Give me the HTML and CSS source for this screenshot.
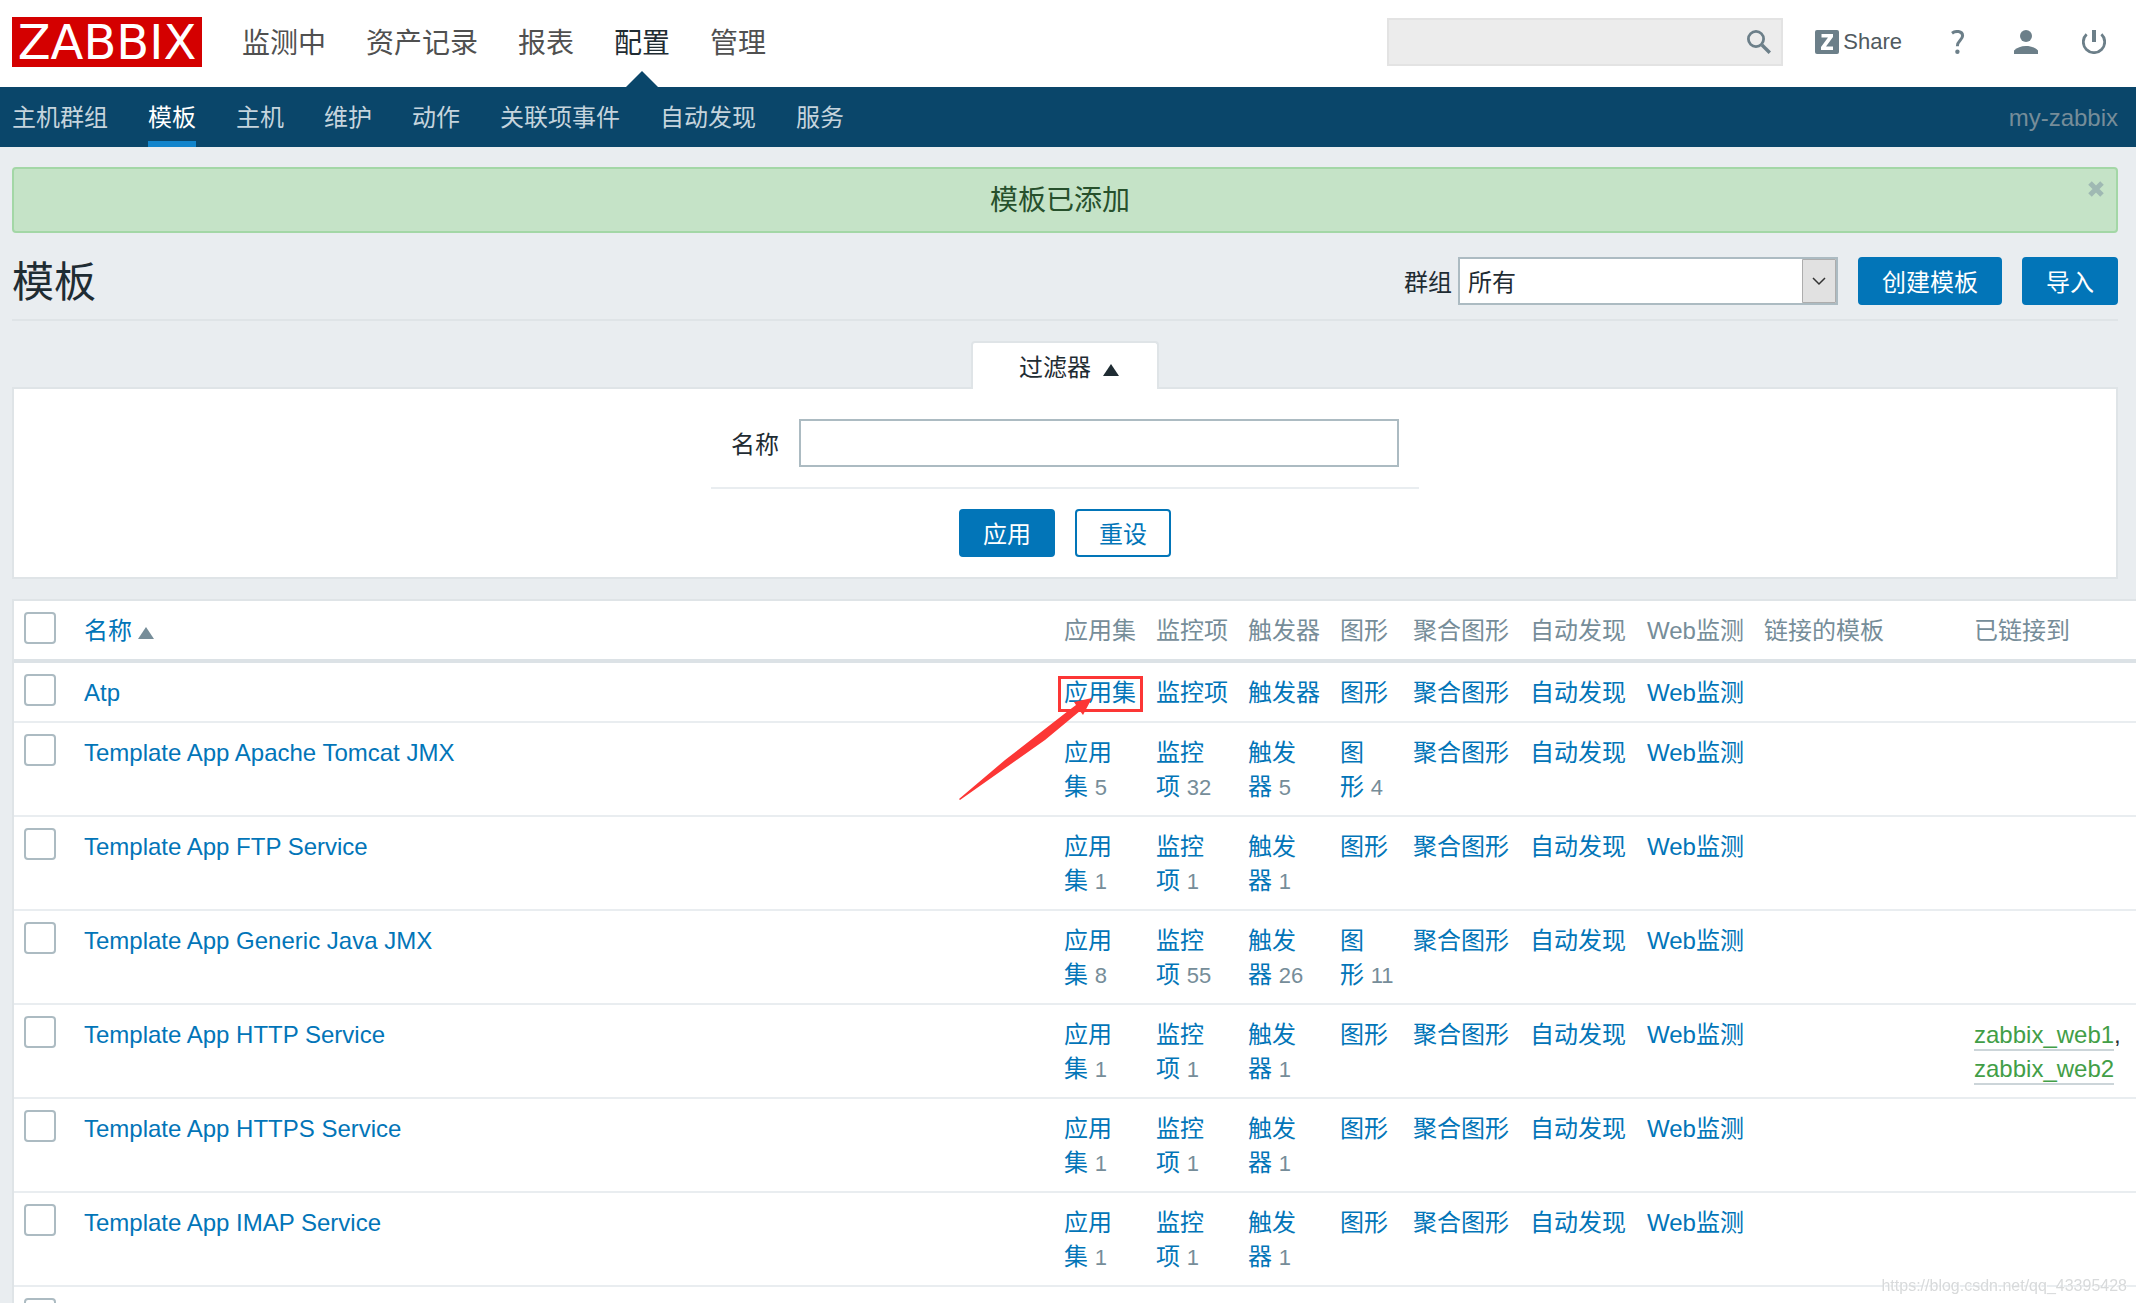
FILE: index.html
```html
<!DOCTYPE html>
<html lang="zh-CN">
<head>
<meta charset="utf-8">
<title>模板</title>
<link rel="stylesheet" href="styles.css">
</head>
<body>
<header class="top">
  <a class="logo" href="#">ZABBIX</a>
  <nav class="main-nav">
    <a href="#">监测中</a>
    <a href="#">资产记录</a>
    <a href="#">报表</a>
    <a class="selected" href="#">配置</a>
    <a href="#">管理</a>
  </nav>
  <form class="search">
    <input type="text" aria-label="搜索">
    <button type="button" aria-label="搜索">
      <svg class="icon" viewBox="0 0 24 24"><circle cx="9" cy="9" r="7.6" fill="none" stroke="currentColor" stroke-width="2.8"/><path d="M15 15l7.800 7.800" stroke="currentColor" stroke-width="3.400"/></svg>
    </button>
  </form>
  <div class="user-nav">
    <a class="share" href="#">
      <svg class="icon" viewBox="0 0 24 24"><rect width="24" height="24" rx="2" fill="currentColor"/><path d="M6.500 4h11.500v3l-7 9.500h7V20H6v-3l7-9.500H6.500z" fill="#fff"/></svg>
      <span>Share</span>
    </a>
    <a href="#" aria-label="帮助">
      <svg class="icon" viewBox="0 0 24 24"><path d="M6 3.200C9.500.6 16.600.6 16.600 5.800c0 4.200-5.400 5-5.200 10.400" fill="none" stroke="currentColor" stroke-width="3"/><circle cx="11.400" cy="21.800" r="2.200" fill="currentColor"/></svg>
    </a>
    <a class="profile" href="#" aria-label="用户">
      <svg class="icon" viewBox="0 0 24 24"><circle cx="12" cy="6" r="6" fill="currentColor"/><path d="M0 24v-3.500C3 17.500 7 16 12 16s9 1.500 12 4.500V24z" fill="currentColor"/></svg>
    </a>
    <a class="signout" href="#" aria-label="登出">
      <svg class="icon" viewBox="0 0 24 24"><path d="M4.600 4.200a10.700 10.700 0 1 0 14.800 0" fill="none" stroke="currentColor" stroke-width="2.800"/><path d="M12 0v12" stroke="currentColor" stroke-width="4"/></svg>
    </a>
  </div>
</header>
<nav class="sub-nav">
  <a href="#">主机群组</a>
  <a class="selected" href="#">模板</a>
  <a href="#">主机</a>
  <a href="#">维护</a>
  <a href="#">动作</a>
  <a href="#">关联项事件</a>
  <a href="#">自动发现</a>
  <a href="#">服务</a>
  <span class="server-name">my-zabbix</span>
</nav>
<main>
  <div class="message" role="status">
    <span>模板已添加</span>
    <button class="close" type="button" aria-label="关闭">
      <svg viewBox="0 0 16 16"><path d="M2 2l12 12M14 2L2 14" stroke="currentColor" stroke-width="5"/></svg>
    </button>
  </div>
  <div class="title-bar">
    <h1>模板</h1>
    <form class="controls">
      <label for="group">群组</label>
      <div class="select">
        <select id="group"><option>所有</option></select>
        <svg class="select-arrow" viewBox="0 0 34 44"><path d="M.5.5h33v43H.5z" fill="#e1e1e1" stroke="#adadad"/><path d="M11 19l6 6 6-6" fill="none" stroke="#333" stroke-width="1.500"/></svg>
      </div>
      <button class="btn" type="button">创建模板</button>
      <button class="btn" type="button">导入</button>
    </form>
  </div>
  <section class="filter">
    <button class="filter-tab" type="button">过滤器<span class="up dark"></span></button>
    <form class="filter-panel">
      <div class="filter-row">
        <label for="name">名称</label>
        <input id="name" type="text">
      </div>
      <div class="filter-actions">
        <button class="btn" type="button">应用</button>
        <button class="btn alt" type="button">重设</button>
      </div>
    </form>
  </section>
  <table class="list">
    <colgroup>
      <col class="c-check"><col><col class="c-count"><col class="c-count"><col class="c-count"><col class="c-graph"><col class="c-wide"><col class="c-wide"><col class="c-wide"><col class="c-linked"><col class="c-to">
    </colgroup>
    <thead>
      <tr><th class="check"><input type="checkbox" aria-label="全选"></th><th><a href="#">名称<span class="up"></span></a></th><th>应用集</th><th>监控项</th><th>触发器</th><th>图形</th><th>聚合图形</th><th>自动发现</th><th>Web监测</th><th>链接的模板</th><th>已链接到</th></tr>
    </thead>
    <tbody>
      <tr>
        <td class="check"><input type="checkbox" aria-label="Atp"></td>
        <td><a href="#">Atp</a></td>
        <td><div class="marked"><a href="#">应用集</a><svg class="marker" viewBox="955 670 195 135"><path d="M1060.500 677.500h82v33h-82z" fill="none" stroke="#fc3635" stroke-width="3"/><path d="M960 799L1006 760 1069 711 1077 705 1075 702 1093 698 1084 715 1081 711 1046 740 961 800z" fill="#fc3635"/></svg></div></td>
        <td><a href="#">监控项</a></td>
        <td><a href="#">触发器</a></td>
        <td><a href="#">图形</a></td>
        <td><a href="#">聚合图形</a></td>
        <td><a href="#">自动发现</a></td>
        <td><a href="#">Web监测</a></td>
        <td></td><td></td>
      </tr>
      <tr>
        <td class="check"><input type="checkbox" aria-label="Template App Apache Tomcat JMX"></td>
        <td><a href="#">Template App Apache Tomcat JMX</a></td>
        <td><a href="#">应用集</a>&nbsp;<small>5</small></td>
        <td><a href="#">监控项</a>&nbsp;<small>32</small></td>
        <td><a href="#">触发器</a>&nbsp;<small>5</small></td>
        <td><a href="#">图形</a>&nbsp;<small>4</small></td>
        <td><a href="#">聚合图形</a></td>
        <td><a href="#">自动发现</a></td>
        <td><a href="#">Web监测</a></td>
        <td></td><td></td>
      </tr>
      <tr>
        <td class="check"><input type="checkbox" aria-label="Template App FTP Service"></td>
        <td><a href="#">Template App FTP Service</a></td>
        <td><a href="#">应用集</a>&nbsp;<small>1</small></td>
        <td><a href="#">监控项</a>&nbsp;<small>1</small></td>
        <td><a href="#">触发器</a>&nbsp;<small>1</small></td>
        <td><a href="#">图形</a></td>
        <td><a href="#">聚合图形</a></td>
        <td><a href="#">自动发现</a></td>
        <td><a href="#">Web监测</a></td>
        <td></td><td></td>
      </tr>
      <tr>
        <td class="check"><input type="checkbox" aria-label="Template App Generic Java JMX"></td>
        <td><a href="#">Template App Generic Java JMX</a></td>
        <td><a href="#">应用集</a>&nbsp;<small>8</small></td>
        <td><a href="#">监控项</a>&nbsp;<small>55</small></td>
        <td><a href="#">触发器</a>&nbsp;<small>26</small></td>
        <td><a href="#">图形</a>&nbsp;<small>11</small></td>
        <td><a href="#">聚合图形</a></td>
        <td><a href="#">自动发现</a></td>
        <td><a href="#">Web监测</a></td>
        <td></td><td></td>
      </tr>
      <tr>
        <td class="check"><input type="checkbox" aria-label="Template App HTTP Service"></td>
        <td><a href="#">Template App HTTP Service</a></td>
        <td><a href="#">应用集</a>&nbsp;<small>1</small></td>
        <td><a href="#">监控项</a>&nbsp;<small>1</small></td>
        <td><a href="#">触发器</a>&nbsp;<small>1</small></td>
        <td><a href="#">图形</a></td>
        <td><a href="#">聚合图形</a></td>
        <td><a href="#">自动发现</a></td>
        <td><a href="#">Web监测</a></td>
        <td></td>
        <td><a class="host" href="#">zabbix_web1</a>, <a class="host" href="#">zabbix_web2</a></td>
      </tr>
      <tr>
        <td class="check"><input type="checkbox" aria-label="Template App HTTPS Service"></td>
        <td><a href="#">Template App HTTPS Service</a></td>
        <td><a href="#">应用集</a>&nbsp;<small>1</small></td>
        <td><a href="#">监控项</a>&nbsp;<small>1</small></td>
        <td><a href="#">触发器</a>&nbsp;<small>1</small></td>
        <td><a href="#">图形</a></td>
        <td><a href="#">聚合图形</a></td>
        <td><a href="#">自动发现</a></td>
        <td><a href="#">Web监测</a></td>
        <td></td><td></td>
      </tr>
      <tr>
        <td class="check"><input type="checkbox" aria-label="Template App IMAP Service"></td>
        <td><a href="#">Template App IMAP Service</a></td>
        <td><a href="#">应用集</a>&nbsp;<small>1</small></td>
        <td><a href="#">监控项</a>&nbsp;<small>1</small></td>
        <td><a href="#">触发器</a>&nbsp;<small>1</small></td>
        <td><a href="#">图形</a></td>
        <td><a href="#">聚合图形</a></td>
        <td><a href="#">自动发现</a></td>
        <td><a href="#">Web监测</a></td>
        <td></td><td></td>
      </tr>
      <tr>
        <td class="check"><input type="checkbox" aria-label="模板"></td>
        <td></td><td></td><td></td><td></td><td></td><td></td><td></td><td></td><td></td><td></td>
      </tr>
    </tbody>
  </table>
</main>
<div class="watermark">https://blog.csdn.net/qq_43395428</div>
</body>
</html>
```
FILE: styles.css
```css
* { box-sizing: border-box; }

body {
  margin: 0;
  height: 100vh;
  overflow: hidden;
  background: #e9edf0;
  color: #1f2c33;
  font: 24px/34px "Liberation Sans", "Noto Sans CJK SC", sans-serif;
}

a { color: #0275b8; text-decoration: none; }

button, input, select { font: inherit; color: inherit; margin: 0; }

.icon { display: block; width: 24px; height: 24px; flex: none; }

/* Header */
.top {
  display: flex;
  align-items: center;
  height: 87px;
  padding: 0 30px 4px 12px;
  background: #fff;
}

.logo {
  width: 190px;
  height: 50px;
  background: #d40000;
  color: #fff;
  font: 48px/50px "DejaVu Sans", sans-serif;
  text-align: center;
}

.main-nav { display: flex; gap: 40px; margin-left: 40px; padding-top: 4px; font-size: 28px; }
.main-nav a { color: #505050; }
.main-nav .selected { position: relative; color: #1f2c33; }
.main-nav .selected::after {
  content: "";
  position: absolute;
  left: 12px;
  top: 44px;
  border: 16px solid transparent;
  border-top-width: 0;
  border-bottom-color: #0a466a;
}

.search {
  display: flex;
  align-items: center;
  width: 396px;
  height: 48px;
  margin-left: auto;
  border: 2px solid #e3e3e3;
  background: #ececec;
}
.search input { flex: 1; min-width: 0; border: 0; background: none; }
.search button { padding: 0 10px; border: 0; background: none; color: #6c7f89; }

.user-nav { display: flex; align-items: center; margin-left: 32px; }
.user-nav a { color: #6c7f89; }
.user-nav .share { display: flex; align-items: center; gap: 4px; margin-right: 44px; }
.share span { color: #505a60; font-size: 22px; }
.user-nav .profile { margin-left: 44px; }
.user-nav .signout { margin-left: 44px; }

.sub-nav {
  display: flex;
  gap: 40px;
  height: 60px;
  padding: 0 18px 0 12px;
  background: #0a466a;
  line-height: 62px;
}
.sub-nav a { color: #c5d4dd; }
.sub-nav .selected { color: #fff; border-bottom: 6px solid #1385cc; height: 60px; }
.server-name { margin-left: auto; color: #768d99; }

/* Page content */
main { padding: 20px 0 0 12px; }

.message {
  display: flex;
  height: 66px;
  margin-right: 18px;
  padding: 10px 12px 0 18px;
  border: 2px solid #a3d7a6;
  border-radius: 4px;
  background: #c5e3c7;
  color: #27502c;
  font-size: 28px;
  line-height: 44px;
  text-align: center;
}
.message span { flex: 1; }
.close { align-self: flex-start; padding: 2px 0 0; border: 0; background: none; color: #9fb9b3; }
.close svg { display: block; width: 16px; height: 16px; }

.title-bar {
  display: flex;
  align-items: center;
  justify-content: space-between;
  height: 88px;
  margin-right: 18px;
  padding-top: 14px;
  padding-bottom: 4px;
  border-bottom: 2px solid #dfe4e7;
}
h1 { margin: 0; padding-top: 4px; font-size: 42px; font-weight: 400; line-height: 60px; }

.controls { display: flex; align-items: center; gap: 20px; }
.controls label { margin-right: -14px; padding-top: 4px; }

.select { position: relative; width: 380px; height: 48px; }
.select select {
  appearance: none;
  width: 100%;
  height: 100%;
  padding: 4px 8px 0;
  border: 2px solid #acbbc2;
  border-radius: 0;
  background: #fff;
}
.select-arrow { position: absolute; right: 2px; top: 2px; width: 34px; height: 44px; pointer-events: none; }

.btn {
  height: 48px;
  padding: 4px 22px 0;
  border: 2px solid #0275b8;
  border-radius: 4px;
  background: #0275b8;
  color: #fff;
  line-height: 40px;
}
.btn.alt { background: #fff; color: #0275b8; }

/* Filter */
.filter {
  display: flex;
  flex-direction: column;
  align-items: center;
  margin: 20px 18px 20px 0;
}
.filter-tab {
  z-index: 1;
  width: 188px;
  height: 48px;
  margin-bottom: -2px;
  padding: 4px 0 0 8px;
  border: 2px solid #dfe4e7;
  border-bottom: 0;
  border-radius: 4px 4px 0 0;
  background: #fff;
  white-space: nowrap;
}
.filter-panel { width: 100%; padding: 30px 0 20px; border: 2px solid #dfe4e7; background: #fff; }
.filter-row {
  display: flex;
  align-items: center;
  gap: 20px;
  width: 708px;
  margin: 0 auto;
  padding: 0 20px 20px;
  border-bottom: 2px solid #e9edf0;
}
.filter-row label { padding-top: 4px; }
.filter-row input { flex: 1; height: 48px; min-width: 0; border: 2px solid #acbbc2; background: #fff; }
.filter-actions { display: flex; justify-content: center; gap: 20px; padding-top: 20px; }

.up {
  display: inline-block;
  margin-left: 6px;
  border: 8px solid transparent;
  border-top-width: 0;
  border-bottom: 12px solid #768d99;
}
.up.dark { margin-left: 12px; border-bottom-color: #1f2c33; }

/* Template list */
.list {
  width: 100%;
  table-layout: fixed;
  border-spacing: 0;
  border: 2px solid #dfe4e7;
  border-width: 2px 0 0 2px;
  background: #fff;
}
.c-check { width: 60px; }
.c-count { width: 92px; }
.c-graph { width: 73px; }
.c-wide { width: 117px; }
.c-linked { width: 210px; }
.c-to { width: 172px; }

.list th, .list td { padding: 13px 10px 11px; text-align: left; vertical-align: top; }
.list th { border-bottom: 4px solid #dce2e6; color: #768d99; font-weight: 400; white-space: nowrap; }
.list td { border-bottom: 2px solid #e9edf0; }
.list .check { padding-top: 11px; }
.list small { color: #768d99; font-size: 22px; line-height: 22px; }

.list input {
  appearance: none;
  display: block;
  width: 32px;
  height: 32px;
  border: 2px solid #acbbc2;
  border-radius: 4px;
  background: #fff;
}

.list .host { padding-bottom: 1px; border-bottom: 2px solid #ccd5d9; color: #429e47; }

.marked { position: relative; }
.marker { position: absolute; left: -110px; top: -6px; width: 195px; height: 135px; pointer-events: none; }

.watermark {
  position: fixed;
  right: 9px;
  bottom: 0;
  color: #d8dadb;
  font-size: 16px;
  text-shadow: 1px 1px #fff;
}
```
